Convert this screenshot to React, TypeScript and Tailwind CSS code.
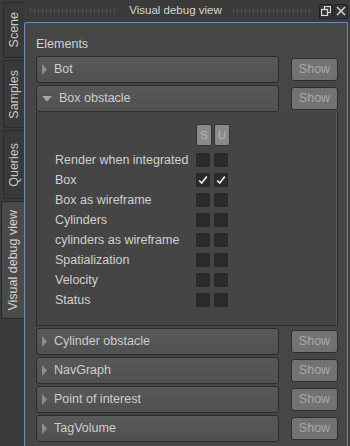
import React from "react";

const font = { fontFamily: '"Liberation Sans", Arial, sans-serif' };

function Tab({ label, h, active }: { label: string; h: number; active?: boolean }) {
  return (
    <div
      className={
        "flex items-center justify-center rounded-l-[3px] border border-r-0 " +
        (active
          ? "bg-[#4a4a4a] border-[#2a2a2a] text-[#d4d4d4] w-[23px]"
          : "bg-[#393939] border-[#2a2a2a] text-[#c8c8c8] w-[21px]")
      }
      style={{ height: h }}
    >
      <span className="[writing-mode:vertical-rl] rotate-180 text-[12.5px] leading-none whitespace-nowrap">{label}</span>
    </div>
  );
}

function Check() {
  return (
    <svg width="14" height="14" viewBox="0 0 14 14">
      <polyline points="2.5,7.5 5.5,10.5 11.5,3" fill="none" stroke="#f4f4f4" strokeWidth="1.8" />
    </svg>
  );
}

function Box({ checked }: { checked?: boolean }) {
  return (
    <div className="w-[14px] h-[14px] rounded-[2px] bg-[#2b2b2b] border border-[#262626] flex items-center justify-center">
      {checked ? <Check /> : null}
    </div>
  );
}

function Header({ label, open }: { label: string; open?: boolean }) {
  return (
    <div className="flex items-start">
      <div className="w-[243px] h-[27px] rounded-[3px] border border-[#2c2c2c] bg-[linear-gradient(#595959,#505050)] flex items-center pl-[4px]">
        {open ? (
          <svg width="11" height="8" viewBox="0 0 11 8" className="ml-[1px] mr-[6px]">
            <polygon points="0,1 10,1 5,6.5" fill="#a8a8a8" />
          </svg>
        ) : (
          <svg width="8" height="11" viewBox="0 0 8 11" className="mr-[5px]">
            <polygon points="1,0 6,5.5 1,11" fill="#8e8e8e" />
          </svg>
        )}
        <span className="text-[12.5px] text-[#cdcdcd]">{label}</span>
      </div>
      <div className="ml-[12px] mt-[2px] w-[47px] h-[23px] rounded-[3px] border border-[#2e2e2e] bg-[#727272] flex items-center justify-center text-[12.5px] text-[#a9a9a9]">
        Show
      </div>
    </div>
  );
}

const rows = [
  { l: "Render when integrated", c: false },
  { l: "Box", c: true },
  { l: "Box as wireframe", c: false },
  { l: "Cylinders", c: false },
  { l: "cylinders as wireframe", c: false },
  { l: "Spatialization", c: false },
  { l: "Velocity", c: false },
  { l: "Status", c: false },
];

export default function App() {
  return (
    <div className="w-[350px] h-[446px] bg-[#3b3b3b] flex overflow-hidden" style={font}>
      <div className="w-[24px] flex flex-col items-end pt-[2px] gap-[2px]">
        <Tab label="Scene" h={56} />
        <Tab label="Samples" h={68} />
        <Tab label="Queries" h={69} />
        <Tab label="Visual debug view" h={118} active />
      </div>
      <div className="flex-1 flex flex-col">
        <div className="h-[22px] flex items-center pl-[6px] pr-[2px]">
          <div className="w-[88px] h-[4px] bg-[repeating-linear-gradient(90deg,#5a5a5a_0_1px,transparent_1px_4px)] opacity-80" />
          <div className="flex-1 text-center text-[11.5px] text-[#d6d6d6]">Visual debug view</div>
          <div className="w-[80px] h-[4px] bg-[repeating-linear-gradient(90deg,#5a5a5a_0_1px,transparent_1px_4px)] opacity-80 mr-[6px]" />
          <div className="w-[14px] h-[15px] border border-[#222] rounded-[2px] bg-[#363636] flex items-center justify-center mr-[1px]">
            <svg width="10" height="10" viewBox="0 0 10 10">
              <rect x="3.5" y="0.5" width="6" height="6" fill="none" stroke="#dcdcdc" strokeWidth="1.2" />
              <rect x="0.5" y="3.5" width="6" height="6" fill="#363636" stroke="#dcdcdc" strokeWidth="1.2" />
            </svg>
          </div>
          <div className="w-[14px] h-[15px] border border-[#222] rounded-[2px] bg-[#363636] flex items-center justify-center">
            <svg width="10" height="10" viewBox="0 0 10 10">
              <path d="M1 1 L9 9 M9 1 L1 9" stroke="#dcdcdc" strokeWidth="1.4" />
            </svg>
          </div>
        </div>
        <div className="flex-1 border-l border-t border-r border-[#6e8fb2] rounded-tl-[3px] bg-[#464646] pl-[11px] pt-[13px] mr-[2px]">
          <div className="text-[12.5px] text-[#d2d2d2] leading-[16px] mb-[4px]">Elements</div>
          <div className="flex flex-col gap-[2px]">
            <Header label="Bot" />
            <div className="flex flex-col">
              <Header label="Box obstacle" open />
              <div className="w-[302px] h-[214px] border border-[#2d2d2d] border-t-0 bg-[#454545] flex flex-col pl-[18px] pt-[12px] shadow-[inset_-1px_0_0_#5a5a5a]">
                <div className="flex ml-[141px] gap-[2px] mb-[7px]">
                  <div className="w-[16px] h-[22px] rounded-[2px] bg-[#8a8a8a] border border-[#353535] flex items-center justify-center text-[11px] text-[#b8b8b8]">S</div>
                  <div className="w-[16px] h-[22px] rounded-[2px] bg-[#8a8a8a] border border-[#353535] flex items-center justify-center text-[11px] text-[#b8b8b8]">U</div>
                </div>
                <div className="flex flex-col gap-[6px]">
                  {rows.map((r) => (
                    <div key={r.l} className="flex items-center h-[14px]">
                      <div className="w-[141px] text-[12.5px] text-[#d0d0d0] whitespace-nowrap">{r.l}</div>
                      <div className="flex gap-[4px]">
                        <Box checked={r.c} />
                        <Box checked={r.c} />
                      </div>
                    </div>
                  ))}
                </div>
              </div>
            </div>
            <Header label="Cylinder obstacle" />
            <Header label="NavGraph" />
            <Header label="Point of interest" />
            <Header label="TagVolume" />
          </div>
        </div>
      </div>
    </div>
  );
}
